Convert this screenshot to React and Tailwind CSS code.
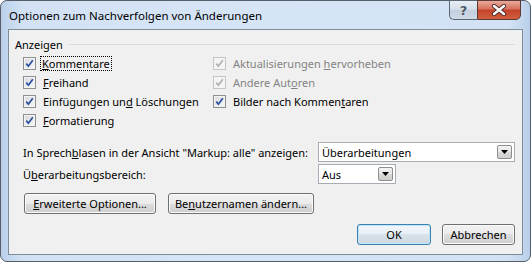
import React from "react";

const Check = ({ disabled }) => (
	<span
		className={
			disabled
				? "w-[13px] h-[13px] shrink-0 border border-[#c4c4c4] bg-[#f4f4f4] flex items-center justify-center"
				: "w-[13px] h-[13px] shrink-0 border border-[#8e8f8f] bg-[linear-gradient(135deg,#d6d9de,#f8f8f8)] shadow-[inset_0_0_0_1px_#f4f4f4] flex items-center justify-center"
		}
	>
		<svg width="11" height="11" viewBox="0 0 11 11">
			<path
				d="M2.3 5.6 L4.4 8.2 L8.8 2.2"
				fill="none"
				stroke={disabled ? "#b0b0b0" : "#2c4f9e"}
				strokeWidth="1.7"
			/>
		</svg>
	</span>
);

const CheckRow = ({ disabled, children }) => (
	<div className="h-[19px] flex items-center gap-[7px]">
		<Check disabled={disabled} />
		<span className={disabled ? "whitespace-nowrap text-[#838383]" : "whitespace-nowrap text-black"}>
			{children}
		</span>
	</div>
);

const Arrow = () => (
	<span className="w-[15px] h-[14px] mr-[2px] shrink-0 border border-[#8d8d8d] rounded-[2px] bg-[linear-gradient(#f4f4f4,#e6e6e6_50%,#d8d8d8_50%,#cfcfcf)] flex items-center justify-center">
		<svg width="7" height="4" viewBox="0 0 7 4">
			<path d="M0 0 H7 L3.5 4 Z" fill="#000" />
		</svg>
	</span>
);

const Button = ({ children, isDefault, className }) => (
	<button
		type="button"
		className={
			(isDefault
				? "border-[#3c7fb1] shadow-[inset_0_0_0_1px_#bfe5f8] bg-[linear-gradient(#f0f6fa,#e8eff4_50%,#d8e2ea_50%,#ccd7e0)] "
				: "border-[#707070] shadow-[inset_0_0_0_1px_#fafafa] bg-[linear-gradient(#f2f2f2,#ebebeb_50%,#dddddd_50%,#cfcfcf)] ") +
			"h-[21px] rounded-[3px] border flex items-center justify-center whitespace-nowrap text-[11px] text-black " +
			className
		}
	>
		<span>{children}</span>
	</button>
);

export default function App() {
	return (
		<div className="w-[531px] h-[262px] bg-white font-['Noto_Sans',sans-serif] text-[11px] leading-[15px] text-black">
			<div className="w-[531px] h-[262px] rounded-[7px] border border-[#555e68] bg-[linear-gradient(90deg,#b9cfe9,#d2e2f4_4%,#d6e5f6_50%,#d2e2f4_96%,#b9cfe9)] flex flex-col px-[7px] pb-[6px]">
				<div className="h-[28px] flex items-start justify-between">
					<span className="pt-[7px] pl-[1px] text-[11.5px]">
						Optionen zum Nachverfolgen von Änderungen
					</span>
					<div className="flex mr-[2px] -mt-px">
						<div className="w-[28px] h-[20px] border border-[#5b6672] border-r-0 rounded-bl-[5px] bg-[linear-gradient(#e8eef6,#d3dde9_50%,#c3cfdd_50%,#cdd9e6)] flex items-center justify-center font-['DejaVu_Sans',sans-serif] text-[13px] font-bold text-[#4a5562] [text-shadow:0_0_1px_#ffffff]">
							?
						</div>
						<div className="w-[44px] h-[20px] border border-[#5b3a36] rounded-br-[5px] bg-[linear-gradient(#e9a99a,#d7705c_45%,#c4422b_50%,#d2603f)] flex items-center justify-center">
							<svg width="16" height="12" viewBox="0 0 16 12">
								<path
									d="M3 2 L13 10 M13 2 L3 10"
									stroke="#4a2a26"
									strokeWidth="4.2"
									strokeLinecap="round"
								/>
								<path
									d="M3 2 L13 10 M13 2 L3 10"
									stroke="#fff"
									strokeWidth="2.4"
									strokeLinecap="round"
								/>
							</svg>
						</div>
					</div>
				</div>

				<div className="flex-1 border border-[#7f8c9a] bg-[#f0f0f0] flex flex-col">
					<div className="mt-[7px] h-[15px] flex items-center pl-[6px] pr-[7px] gap-[5px]">
						<span>Anzeigen</span>
						<span className="flex-1 h-px bg-[#d8dde3]" />
					</div>

					<div className="mt-[2px] pl-[14px] grid grid-cols-[190px_1fr]">
						<div className="flex flex-col">
							<div className="h-[19px] flex items-center gap-[5px]">
								<Check />
								<span className="outline outline-1 outline-dotted outline-black px-[1px] leading-[13px]">
									<span className="underline">K</span>ommentare
								</span>
							</div>
							<CheckRow>
								<span className="underline">F</span>reihand
							</CheckRow>
							<CheckRow>
								Einfügungen un<span className="underline">d</span>{" "}
								Löschungen
							</CheckRow>
							<CheckRow>
								<span className="underline">F</span>ormatierung
							</CheckRow>
						</div>
						<div className="flex flex-col">
							<CheckRow disabled>
								Aktualisierungen <span className="underline">h</span>
								ervorheben
							</CheckRow>
							<CheckRow disabled>
								Andere Aut<span className="underline">o</span>ren
							</CheckRow>
							<CheckRow>
								Bilder nach Kommen<span className="underline">t</span>
								aren
							</CheckRow>
						</div>
					</div>

					<div className="mt-[12px] pl-[14px] pr-[7px] grid grid-cols-[295px_1fr] gap-y-[2px]">
						<div className="h-[20px] flex items-center">
							<span className="whitespace-nowrap">
								In Sprech<span className="underline">b</span>lasen in der
								Ansicht "Markup: alle" anzeigen:
							</span>
						</div>
						<div className="h-[20px] border border-[#a7adb5] bg-white flex items-center justify-between pl-[3px]">
							<span>Überarbeitungen</span>
							<Arrow />
						</div>
						<div className="h-[20px] flex items-center">
							<span>
								Ü<span className="underline">b</span>erarbeitungsbereich:
							</span>
						</div>
						<div className="w-[78px] h-[20px] border border-[#a7adb5] bg-white flex items-center justify-between pl-[3px]">
							<span>Aus</span>
							<Arrow />
						</div>
					</div>

					<div className="mt-[9px] pl-[15px] flex gap-[12px]">
						<Button className="w-[132px]">
							<span className="underline">E</span>rweiterte Optionen...
						</Button>
						<Button className="w-[146px]">
							Be<span className="underline">n</span>utzernamen ändern...
						</Button>
					</div>

					<div className="mt-[10px] pr-[7px] flex justify-end gap-[11px]">
						<Button isDefault className="w-[74px]">
							OK
						</Button>
						<Button className="w-[73px]">Abbrechen</Button>
					</div>
				</div>
			</div>
		</div>
	);
}
